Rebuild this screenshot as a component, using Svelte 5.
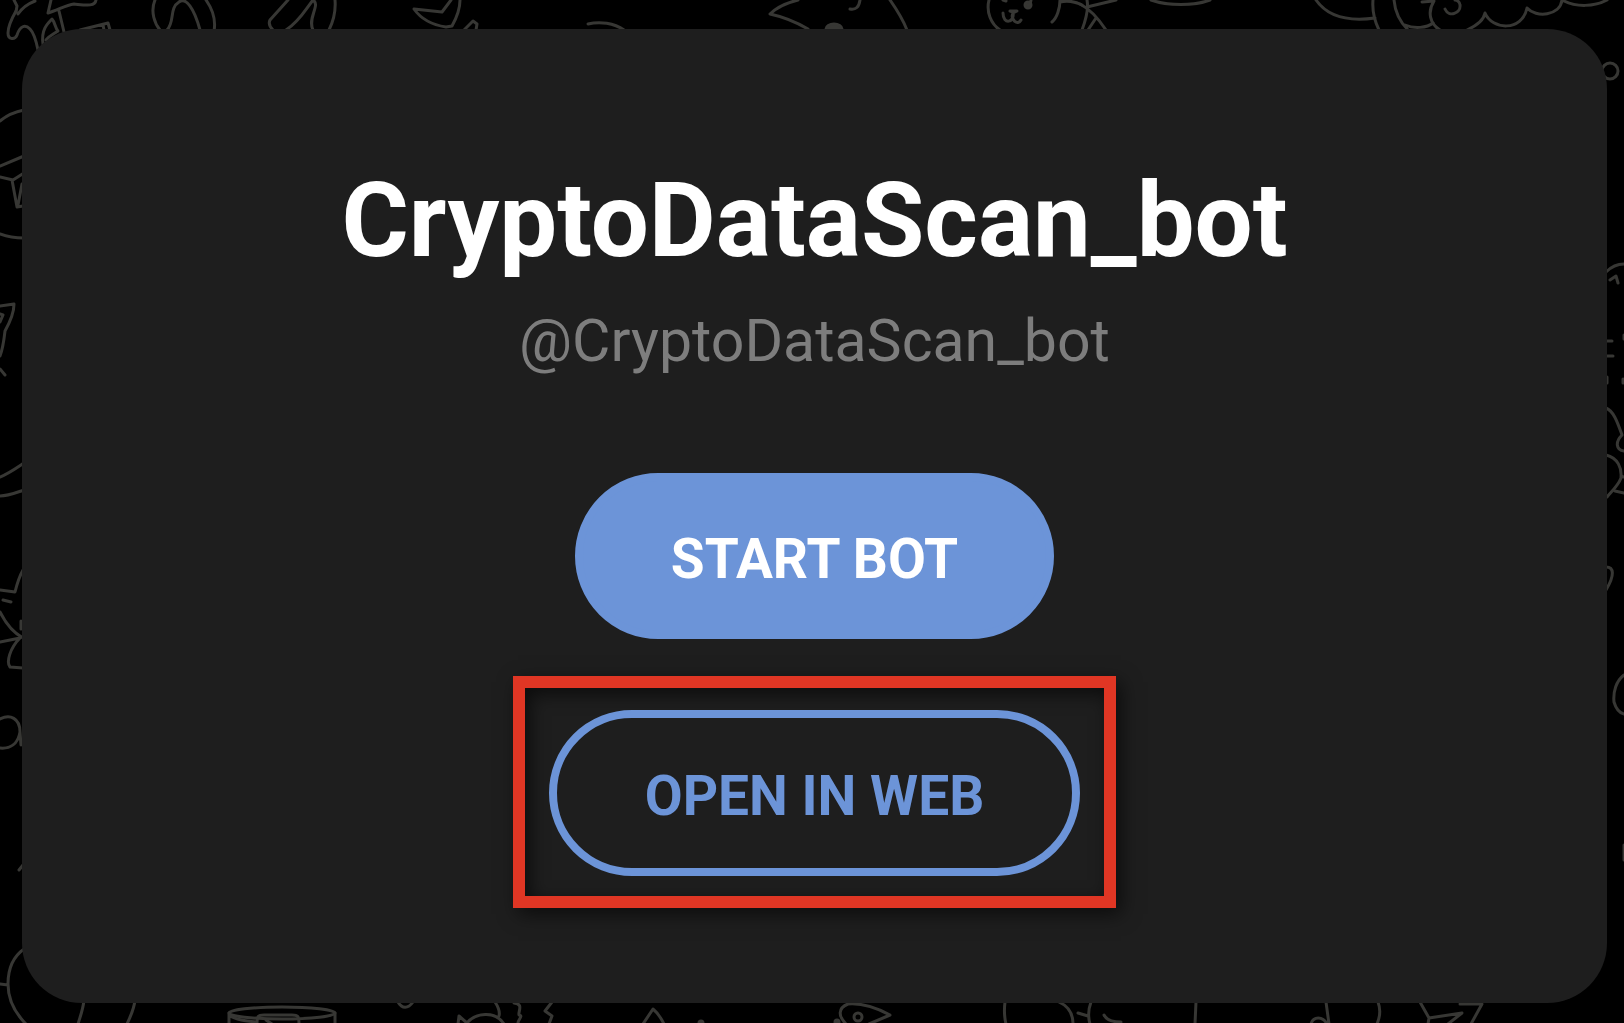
<script lang="ts">
  const botName = 'CryptoDataScan_bot';

  // line doodles of the chat wallpaper, grouped by the edge they sit on
  const doodles = {
    top: [
      'M14 0 L17 6 L16 12 M35 1 C27 4 22 8 18 14',
      'M16 11 C12 18 8 27 8 33 C8 40 15 40 17 35 C20 26 25 24 30 29 C34 33 36 40 38 50',
      'M51 0 L48 13 C58 10 66 5 74 4 C85 5 95 7 96 0 M59 11 L64 32',
      'M43 44 C41 30 47 24 52 19 C55 22 55 28 58 31 C52 35 49 36 46 40',
      'M80 30 L108 23 L110 30 M103 25 L104 30',
      'M155 0 C150 12 155 24 160 30 M167 30 C175 22 169 8 179 2 C186 -3 194 8 200 30 M206 0 C213 10 216 20 214 31',
      'M288 0 L270 20 C268 24 270 27 273 30 M286 30 C299 22 306 9 313 0 C321 5 307 18 313 30 M335 0 C336 12 333 22 329 30',
      'M451 0 L442 12 L414 9 C421 19 433 25 446 27 L452 26 C457 17 460 8 460 0 M464 30 L473 21 L477 24 L476 30',
      'M588 24 C600 21 614 23 624 30',
      'M798 0 C786 3 776 8 770 14 C784 17 796 22 808 29 M860 0 C859 7 856 10 850 9 M890 0 C897 10 903 20 907 30',
      'M989 0 C986 12 991 24 1000 30 M1003 13 C1003 25 1015 23 1013 12 L1010 11 L1017 11 L1013 13 C1010 20 1018 26 1021 20',
      'M1003 0 L1006 1 M1031 0 L1030 5 M1060 0 C1060 8 1057 18 1052 22 M1060 2 C1068 0 1076 2 1082 5',
      'M1080 4 C1088 8 1098 18 1106 30 M1087 0 C1089 10 1085 22 1082 30 M1096 18 L1088 30 M1087 7 L1116 0',
      'M1151 0 C1168 6 1194 6 1210 0',
      'M1316 0 C1327 16 1346 22 1375 18 M1373 0 C1372 12 1375 22 1379 30',
      'M1394 0 C1395 12 1400 22 1408 30 M1405 25 C1414 29 1427 28 1433 23',
      'M1445 9 C1449 18 1461 13 1460 5 C1460 2 1457 0 1455 0 M1422 2 L1434 1 C1427 12 1430 24 1440 30',
      'M1467 30 C1478 25 1484 19 1485 13 C1492 30 1522 32 1527 8 C1536 18 1560 16 1562 0 M1564 1 C1576 7 1594 7 1607 0'
    ],
    left: [
      'M0 121 C6 116 14 112 24 110 M0 166 L24 156',
      'M0 177 L13 180 L24 173 M12 180 L17 207 L23 206 M22 184 L18 205',
      'M0 234 C8 237 15 238 24 238',
      'M0 306 L14 304 C14 314 10 322 5 331 C4 340 3 348 0 356 M0 314 L3 315 L0 322 M0 369 L5 375',
      'M0 477 C8 474 15 469 24 463 M0 496 C8 496 15 493 24 490',
      'M0 590 L15 592 C17 584 19 577 23 570 M3 600 L11 602 M0 612 C5 622 12 632 23 638',
      'M0 642 L20 638 C10 648 6 662 10 667 L23 668 M21 621 L21 629',
      'M0 719 C10 714 20 718 20 732 C18 744 10 749 0 748 M20 732 L21 745 M19 870 L23 865',
      'M24 949 C14 956 8 966 8 984 C8 1000 16 1014 26 1024 M0 984 L8 985'
    ],
    right: [
      'M1606 272 C1612 266 1618 264 1624 264 M1610 280 L1616 276 L1618 283',
      'M1606 341 L1612 341 M1606 356 L1613 356 M1607 377 V383 M1624 335 V339 M1623 379 V383',
      'M1606 408 C1614 411 1618 424 1622 435 C1615 442 1616 450 1624 451',
      'M1606 455 C1618 458 1622 468 1621 478 C1618 486 1611 492 1607 497 M1615 491 L1624 493 M1621 476 L1624 477',
      'M1606 567 C1614 567 1615 575 1606 590',
      'M1624 675 C1616 681 1613 692 1614 702 C1616 709 1620 713 1624 714 M1624 845 V860'
    ],
    bottom: [
      'M84 1000 C83 1010 80 1017 78 1024 M135 1000 C134 1010 130 1017 127 1024',
      'M229 1013 V1024 M335 1013 V1024 M229 1015 C236 1020 246 1021 256 1022',
      'M257 1024 C257 1016 258 1015 264 1015 H292 C298 1015 299 1016 299 1024 M266 1020 L272 1024',
      'M398 1002 C402 1009 408 1009 413 1002',
      'M458 1024 L459 1016 L467 1023 C475 1013 495 1010 504 1024 M495 1002 C499 1008 500 1012 499 1016',
      'M514 1003 C524 1004 518 1011 519 1015 C524 1016 517 1020 518 1024 M552 1002 L545 1011 L552 1016 L549 1024',
      'M643 1024 L653 1009 C658 1013 661 1018 664 1024',
      'M869 1024 L890 1015 C875 1007 860 1003 848 1004 C838 1008 838 1016 846 1024',
      'M1005 1002 C1004 1010 1004 1016 1006 1024 M1059 1002 C1068 1006 1073 1014 1073 1024',
      'M1078 1013 L1088 1016 M1091 1002 C1088 1010 1088 1017 1090 1024 M1104 1015 C1107 1021 1114 1022 1121 1022',
      'M1196 1002 L1195 1024 M1311 1024 C1313 1016 1323 1016 1327 1024 M1326 1002 L1329 1024',
      'M1378 1002 C1381 1010 1380 1017 1377 1024',
      'M1420 1002 L1429 1018 L1462 1013 L1448 1024 M1429 1018 L1428 1024 M1460 1004 L1482 1004 L1471 1024'
    ]
  };

  const paths = Object.values(doodles).flat();
</script>

<main class="page">
  <svg class="wallpaper" viewBox="0 0 1624 1023" preserveAspectRatio="xMidYMid slice" aria-hidden="true">
    {#each paths as d}
      <path {d} />
    {/each}
    <ellipse class="solid" cx="834" cy="29" rx="8" ry="5" />
    <circle class="solid" cx="1028" cy="5" r="3" />
    <circle cx="1610" cy="71" r="8" />
    <ellipse cx="282" cy="1013" rx="53" ry="6" />
    <circle cx="858" cy="1017" r="4" />
    <circle class="solid" cx="837" cy="1022" r="2" />
    <circle class="solid" cx="701" cy="1023" r="2" />
  </svg>

  <section class="card">
    <h1 class="title">{botName}</h1>
    <p class="username">@{botName}</p>
    <a class="btn btn-primary" href="#start">START BOT</a>
    <div class="callout">
      <a class="btn btn-outline" href="#web">OPEN IN WEB</a>
    </div>
  </section>
</main>

<style>
  :global(body) {
    margin: 0;
    background: #000;
  }

  .page {
    position: relative;
    display: flex;
    box-sizing: border-box;
    min-height: 100vh;
    padding: 29px 17px 20px 22px;
    overflow: hidden;
    font-family: Roboto, sans-serif;
  }

  .wallpaper {
    position: absolute;
    inset: 0;
    width: 100%;
    height: 100%;
    fill: none;
    stroke: #373734;
    stroke-width: 3;
    stroke-linecap: round;
    stroke-linejoin: round;
  }

  .solid {
    fill: #373734;
  }

  .card {
    position: relative;
    display: flex;
    flex: 1;
    flex-direction: column;
    align-items: center;
    box-sizing: border-box;
    padding: 132px 24px 94px;
    border-radius: 60px;
    background: #1e1e1e;
  }

  .title {
    margin: 0;
    font-size: 103px;
    font-weight: 700;
    line-height: 120px;
    color: #fff;
  }

  .username {
    margin: 26px 0 98px;
    font-size: 59px;
    line-height: 68px;
    color: #7d7d7d;
  }

  .btn {
    display: block;
    box-sizing: border-box;
    border: 8px solid #6c94d8;
    border-radius: 84px;
    padding: 46px 88px 40px;
    font-size: 55px;
    font-weight: 700;
    line-height: 64px;
    text-decoration: none;
    white-space: nowrap;
  }

  .btn-primary {
    background: #6c94d8;
    color: #fff;
  }

  .btn-outline {
    color: #6c94d8;
  }

  .callout {
    margin-top: 37px;
    padding: 22px 24px 20px;
    border: 12px solid #e03624;
    box-shadow:
      5px 6px 18px #0009,
      inset 5px 6px 18px #0009;
  }
</style>
